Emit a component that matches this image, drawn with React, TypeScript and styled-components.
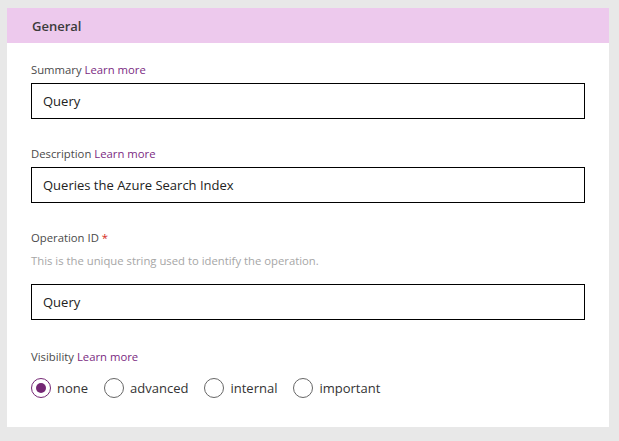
import React, { useState } from "react";
import styled, { createGlobalStyle } from "styled-components";

const GlobalStyle = createGlobalStyle`
  html, body {
    margin: 0;
    padding: 0;
    background: #e8e8e8;
  }
  body {
    font-family: "Open Sans", "Liberation Sans", sans-serif;
  }
  * { box-sizing: border-box; }
`;

const Page = styled.div`
  width: 619px;
  height: 441px;
  padding: 8px 10px 0 7px;
  background: #e8e8e8;
`;

const Card = styled.section`
  width: 602px;
  background: #ffffff;
  padding-bottom: 29px;
`;

const Header = styled.div`
  height: 35px;
  background: #edc9ed;
  display: flex;
  align-items: center;
  padding-left: 25px;
  font-size: 13px;
  font-weight: 600;
  color: #3b3b3b;
`;

const Body = styled.div`
  padding: 18px 24px 0 24px;
  display: flex;
  flex-direction: column;
`;

const Field = styled.div<{ $gap?: number }>`
  margin-top: ${(p) => p.$gap ?? 26}px;
  display: flex;
  flex-direction: column;
`;

const Label = styled.div<{ $mb?: number }>`
  height: 17px;
  line-height: 17px;
  font-size: 11.3px;
  color: #4a4a4a;
  margin-bottom: ${(p) => p.$mb ?? 5}px;
`;

const LearnMore = styled.a`
  color: #7b2a82;
  text-decoration: none;
  cursor: pointer;
`;

const Required = styled.span`
  color: #d52b1e;
  margin-left: 3px;
`;

const Help = styled.div`
  height: 17px;
  line-height: 17px;
  font-size: 11.3px;
  color: #a6a6a6;
  margin-top: 6px;
  margin-bottom: 15px;
`;

const Input = styled.input`
  width: 100%;
  height: 36px;
  border: 1px solid #000000;
  border-radius: 0;
  padding: 0 11px;
  font-family: inherit;
  font-size: 13px;
  color: #222222;
  background: #ffffff;
  outline: none;
`;

const RadioRow = styled.div`
  display: flex;
  align-items: center;
  margin-top: 8px;
  height: 20px;
`;

const Option = styled.label`
  display: flex;
  align-items: center;
  gap: 6px;
  margin-right: 16px;
  font-size: 13px;
  color: #333333;
  cursor: pointer;
`;

const Circle = styled.span<{ $checked: boolean }>`
  width: 20px;
  height: 20px;
  border-radius: 50%;
  border: 1px solid ${(p) => (p.$checked ? "#742774" : "#666666")};
  display: flex;
  align-items: center;
  justify-content: center;
  &::after {
    content: "";
    width: 10px;
    height: 10px;
    border-radius: 50%;
    background: ${(p) => (p.$checked ? "#742774" : "transparent")};
  }
`;

const HiddenRadio = styled.input`
  display: none;
`;

const options = ["none", "advanced", "internal", "important"];

export default function App() {
  const [vis, setVis] = useState("none");
  return (
    <>
      <GlobalStyle />
      <Page>
        <Card>
          <Header>General</Header>
          <Body>
            <Field $gap={0}>
              <Label>
                Summary <LearnMore>Learn more</LearnMore>
              </Label>
              <Input defaultValue="Query" />
            </Field>
            <Field>
              <Label>
                Description <LearnMore>Learn more</LearnMore>
              </Label>
              <Input defaultValue="Queries the Azure Search Index" />
            </Field>
            <Field>
              <Label $mb={0}>
                Operation ID<Required>*</Required>
              </Label>
              <Help>This is the unique string used to identify the operation.</Help>
              <Input defaultValue="Query" />
            </Field>
            <Field $gap={28}>
              <Label>
                Visibility <LearnMore>Learn more</LearnMore>
              </Label>
              <RadioRow>
                {options.map((o) => (
                  <Option key={o}>
                    <HiddenRadio
                      type="radio"
                      name="vis"
                      checked={vis === o}
                      onChange={() => setVis(o)}
                    />
                    <Circle $checked={vis === o} />
                    {o}
                  </Option>
                ))}
              </RadioRow>
            </Field>
          </Body>
        </Card>
      </Page>
    </>
  );
}
